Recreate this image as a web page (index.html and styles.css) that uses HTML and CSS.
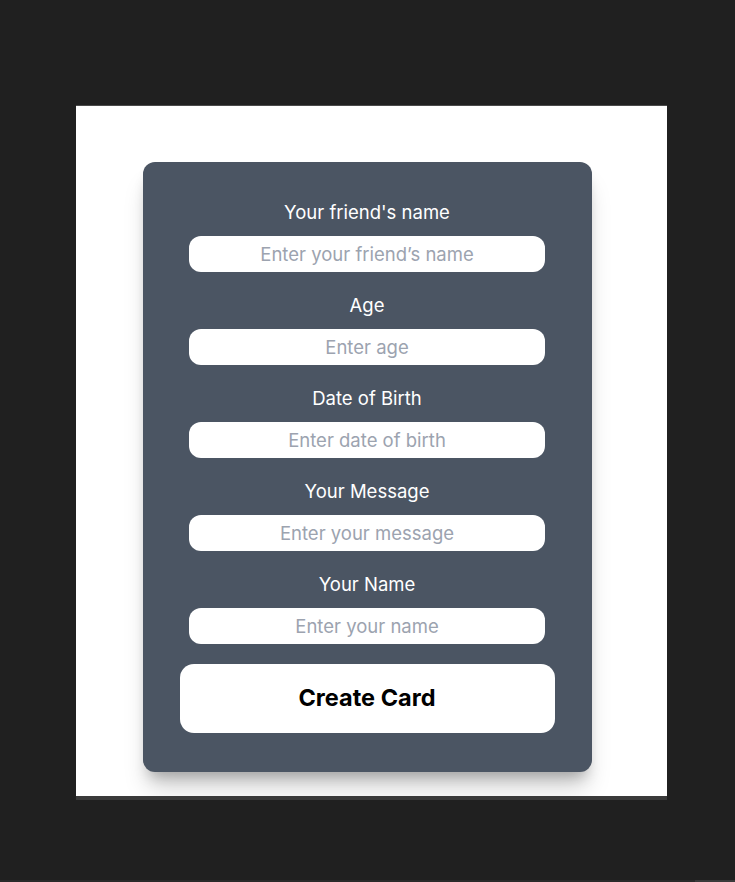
FILE: index.html
```html
<!DOCTYPE html>
<html lang="en">
<head>
<meta charset="utf-8">
<title>Create Card</title>
<link rel="stylesheet" href="styles.css">
</head>
<body>
<div class="stage">
  <div class="panel">
    <form class="card">
      <div class="field">
        <label class="label" for="friend">Your friend's name</label>
        <input class="input" id="friend" type="text" placeholder="Enter your friend’s name">
      </div>
      <div class="field">
        <label class="label" for="age">Age</label>
        <input class="input" id="age" type="text" placeholder="Enter age">
      </div>
      <div class="field">
        <label class="label" for="dob">Date of Birth</label>
        <input class="input" id="dob" type="text" placeholder="Enter date of birth">
      </div>
      <div class="field">
        <label class="label" for="msg">Your Message</label>
        <input class="input" id="msg" type="text" placeholder="Enter your message">
      </div>
      <div class="field">
        <label class="label" for="name">Your Name</label>
        <input class="input" id="name" type="text" placeholder="Enter your name">
      </div>
      <button class="button" type="button">Create Card</button>
    </form>
  </div>
  <div class="panel-edge"></div>
</div>
<div class="bottom-bar"><div class="bottom-thumb"></div></div>
</body>
</html>
```
FILE: styles.css
```css
* { box-sizing: border-box; }
html, body { margin: 0; padding: 0; }
body {
  background: #202020;
  width: 735px;
  height: 882px;
  font-family: Inter, "Noto Sans", sans-serif;
  display: flex;
  flex-direction: column;
  overflow: hidden;
}
.stage {
  padding: 105px 0 0 76px;
  flex: 1;
}
.panel {
  width: 591px;
  height: 691px;
  background: #ffffff;
  border-top: 1px solid #4a4a4a;
  padding: 56px 0 0 67px;
  overflow: hidden;
}
.panel-edge {
  width: 591px;
  height: 4px;
  background: #3a3a3a;
}
.card {
  width: 449px;
  height: 610px;
  background: #4b5563;
  border-radius: 12px;
  box-shadow: 0 20px 25px -5px rgba(0, 0, 0, 0.18), 0 10px 14px -6px rgba(0, 0, 0, 0.25);
  padding: 36px 37px 0 36px;
  display: flex;
  flex-direction: column;
  align-items: center;
  gap: 19px;
}
.field {
  display: flex;
  flex-direction: column;
  align-items: center;
  gap: 10px;
  width: 356px;
}
.label {
  color: #ffffff;
  font-size: 18.5px;
  line-height: 28px;
  height: 28px;
}
.input {
  width: 356px;
  height: 36px;
  border: none;
  border-radius: 12px;
  background: #ffffff;
  font-family: inherit;
  font-size: 18.5px;
  text-align: center;
  color: #111827;
  outline: none;
  padding: 0 12px;
}
.input::placeholder { color: #9ca3af; }
.button {
  margin-top: 1px;
  width: 375px;
  height: 69px;
  border: none;
  border-radius: 14px;
  background: #ffffff;
  color: #000000;
  font-family: inherit;
  font-weight: 700;
  font-size: 23.5px;
  padding: 0 0 2px;
  cursor: pointer;
}
.bottom-bar {
  height: 2px;
  background: #2a2a2a;
  display: flex;
  justify-content: flex-end;
}
.bottom-thumb {
  width: 40px;
  background: #3a3a3a;
}
```
